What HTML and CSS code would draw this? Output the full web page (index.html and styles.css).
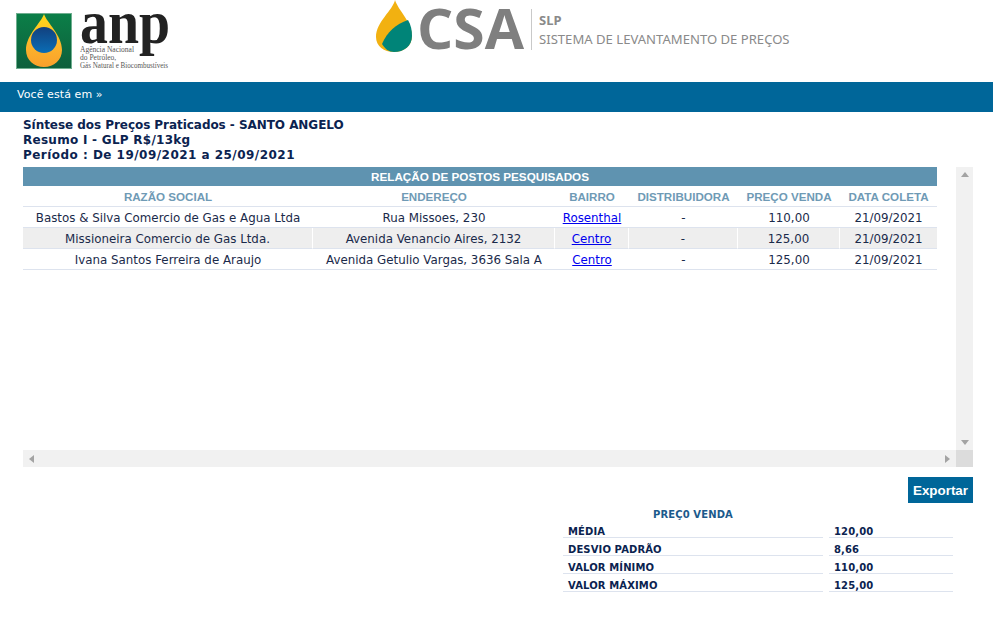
FILE: index.html
```html
<!DOCTYPE html>
<html lang="pt-BR">
<head>
<meta charset="utf-8">
<title>SLP - Sistema de Levantamento de Preços</title>
<link rel="stylesheet" href="styles.css">
</head>
<body>
<header class="top">
  <svg class="logo-anp" width="160" height="60" viewBox="0 0 160 60">
    <defs>
      <linearGradient id="g" x1="0" y1="0" x2="0" y2="1"><stop offset="0" stop-color="#0b7f48"/><stop offset="1" stop-color="#0e5f3c"/></linearGradient>
      <linearGradient id="b" x1="0" y1="0" x2="0" y2="1"><stop offset="0" stop-color="#12407e"/><stop offset="1" stop-color="#0a6db5"/></linearGradient>
      <linearGradient id="o" x1="0" y1="0" x2="0" y2="1"><stop offset="0" stop-color="#ffd91a"/><stop offset="0.55" stop-color="#fdb62a"/><stop offset="1" stop-color="#f9a02c"/></linearGradient>
    </defs>
    <rect x="0.5" y="0.5" width="55" height="55" fill="url(#g)" stroke="#6fae8f"/>
    <path d="M28 1 C25 10 10 22 10 37 C10 47 18 54 28 54 C38 54 46 47 46 37 C46 22 31 10 28 1Z" fill="url(#o)"/>
    <circle cx="28" cy="27" r="13" fill="url(#b)"/>
    <text class="anp-word" x="64" y="30" textLength="90" lengthAdjust="spacingAndGlyphs">anp</text>
    <text class="anp-small" x="64" y="39" textLength="54" lengthAdjust="spacingAndGlyphs">Agência Nacional</text>
    <text class="anp-small" x="64" y="47">do Petróleo,</text>
    <text class="anp-small" x="64" y="55" textLength="88" lengthAdjust="spacingAndGlyphs">Gás Natural e Biocombustíveis</text>
  </svg>
  <div class="brand">
    <svg class="logo-csa" width="152" height="54" viewBox="0 0 152 54">
      <path d="M19 0 C17 10 0 22 0 37 C0 46 8 52 18 52 C28 52 36 46 36 36 C36 22 22 10 19 0Z" fill="#f2b111"/>
      <path d="M6 44 C11 32 20 24 32 20 C35 25 36 30 36 36 C36 46 28 52 18 52 C13 52 9 49 6 44Z" fill="#008478"/>
      <text class="csa-word" x="41" y="49" textLength="107" lengthAdjust="spacingAndGlyphs">CSA</text>
    </svg>
    <div class="brand-text">
      <strong class="slp">SLP</strong>
      <span class="sys">SISTEMA DE LEVANTAMENTO DE PREÇOS</span>
    </div>
  </div>
</header>
<nav class="crumb">Você está em »</nav>
<main class="content">
  <h1 class="summary"><span class="line-a">Síntese dos Preços Praticados - SANTO ANGELO</span><span class="line-b">Resumo I - GLP R$/13kg</span><span class="line-c">Período : De 19/09/2021 a 25/09/2021</span></h1>
  <section class="scroller">
    <div class="view">
      <table class="stations">
        <colgroup><col class="c1"><col class="c2"><col class="c3"><col class="c4"><col class="c5"><col class="c6"></colgroup>
        <thead>
          <tr><th class="band" colspan="6">RELAÇÃO DE POSTOS PESQUISADOS</th></tr>
          <tr class="heads"><th>RAZÃO SOCIAL</th><th>ENDEREÇO</th><th>BAIRRO</th><th>DISTRIBUIDORA</th><th>PREÇO VENDA</th><th>DATA COLETA</th></tr>
        </thead>
        <tbody>
          <tr><td>Bastos &amp; Silva Comercio de Gas e Agua Ltda</td><td>Rua Missoes, 230</td><td><a href="#">Rosenthal</a></td><td>-</td><td>110,00</td><td>21/09/2021</td></tr>
          <tr class="alt"><td>Missioneira Comercio de Gas Ltda.</td><td>Avenida Venancio Aires, 2132</td><td><a href="#">Centro</a></td><td>-</td><td>125,00</td><td>21/09/2021</td></tr>
          <tr><td>Ivana Santos Ferreira de Araujo</td><td>Avenida Getulio Vargas, 3636 Sala A</td><td><a href="#">Centro</a></td><td>-</td><td>125,00</td><td>21/09/2021</td></tr>
        </tbody>
      </table>
    </div>
    <div class="bar-v"><i class="arrow up"></i><i class="arrow down"></i></div>
    <div class="bar-h"><i class="arrow left"></i><i class="arrow right"></i></div>
    <div class="corner"></div>
  </section>
  <div class="actions"><button class="export" type="button">Exportar</button></div>
  <table class="stats">
    <caption>PREÇ0 VENDA</caption>
    <tbody>
      <tr><th>MÉDIA</th><td class="gap"></td><td>120,00</td></tr>
      <tr><th>DESVIO PADRÃO</th><td class="gap"></td><td>8,66</td></tr>
      <tr><th>VALOR MÍNIMO</th><td class="gap"></td><td>110,00</td></tr>
      <tr><th>VALOR MÁXIMO</th><td class="gap"></td><td>125,00</td></tr>
    </tbody>
  </table>
</main>
</body>
</html>
```
FILE: styles.css
```css
* { box-sizing: border-box; }
html, body { margin: 0; padding: 0; background: #fff; overflow: hidden; }
body { height: 622px; font-family: "DejaVu Sans", Verdana, sans-serif; color: #0b2350; }

.top { height: 82px; display: flex; align-items: flex-start; position: relative; }
.logo-anp { display: block; margin: 13px 0 0 16px; flex: none; overflow: visible; }
.anp-word { font-family: "Liberation Serif", serif; font-size: 62px; font-weight: 700; fill: #222; }
.anp-small { font-family: "Liberation Serif", serif; font-size: 7.5px; fill: #555; }

.brand { display: flex; align-items: flex-start; margin-left: 200px; }
.logo-csa { display: block; flex: none; overflow: visible; }
.csa-word { font-family: "Open Sans", sans-serif; font-size: 56px; font-weight: 700; fill: #7f7f7f; }
.brand-text { margin: 9px 0 0 3px; height: 41px; border-left: 1px solid #c9c9c9; padding: 4px 0 0 7px; display: flex; flex-direction: column; color: #8a8a8a; }
.slp { font-size: 13px; line-height: 14px; font-weight: 700; font-family: "Noto Sans", sans-serif; }
.sys { font-size: 13.1px; line-height: 20px; margin-top: 2px; white-space: nowrap; font-family: "Noto Sans", sans-serif; }

.crumb { height: 30px; background: #006699; color: #fff; font-size: 11px; letter-spacing: 0.08px; line-height: 25px; padding-left: 17px; }

.content { padding: 6px 20px 0 23px; }
.summary { margin: 0; font-size: 12px; line-height: 15px; font-weight: 700; color: #0b2350; height: 49px; }
.summary span { display: block; }
.line-a { letter-spacing: -0.05px; }
.line-b { letter-spacing: 0.27px; }
.line-c { letter-spacing: 0.47px; }

.scroller { display: grid; grid-template-columns: 933px 17px; grid-template-rows: 283px 17px; width: 950px; }
.view { overflow: hidden; }
.stations { width: 914px; border-collapse: separate; border-spacing: 0; table-layout: fixed; font-size: 11.85px; }
.c1 { width: 290px; } .c2 { width: 242px; } .c3 { width: 74px; } .c4 { width: 109px; } .c5 { width: 102px; } .c6 { width: 97px; }
.stations th { padding: 1px 0 0; text-align: center; }
.stations td { padding: 2px 0 0; text-align: center; }
.band { height: 20px; background: #5f93b0; color: #fff; font: 700 11.7px/18px "Liberation Sans", Arial, sans-serif; border-bottom: 1px solid #fff; vertical-align: top; }
.heads th { height: 20px; font: 700 11.6px/18px "Liberation Sans", Arial, sans-serif; color: #6f9ab5; border-bottom: 1px solid #dde3ee; }
.stations td { height: 21px; border-bottom: 1px solid #dde3ee; color: #1a2a4a; line-height: 18px; white-space: nowrap; }
.alt td { background: #eeeeee; border-right: 1px solid #fff; }
.alt td:last-child { border-right: 0; }
.stations a { color: #0000ee; text-decoration: underline; }

.bar-v { background: #f1f1f1; position: relative; }
.bar-h { background: #f1f1f1; position: relative; }
.corner { background: #dcdcdc; }
.arrow { position: absolute; width: 0; height: 0; border-style: solid; border-color: transparent; }
.up { left: 5px; top: 5px; border-width: 0 4px 5px; border-bottom-color: #a3a3a3; }
.down { left: 5px; bottom: 5px; border-width: 5px 4px 0; border-top-color: #a3a3a3; }
.left { left: 6px; top: 5px; border-width: 4px 5px 4px 0; border-right-color: #a3a3a3; }
.right { right: 6px; top: 5px; border-width: 4px 0 4px 5px; border-left-color: #a3a3a3; }

.actions { display: flex; justify-content: flex-end; width: 950px; margin-top: 10px; }
.export { width: 65px; height: 26px; padding: 0; border: 0; background: #006699; color: #fff; font: 700 13.4px "Liberation Sans", Arial, sans-serif; }

.stats { margin: 3px 0 0 540px; width: 390px; border-collapse: separate; border-spacing: 0; table-layout: fixed; font-size: 10px; letter-spacing: 0.12px; font-weight: 700; color: #0b2350; }
.stats caption { width: 260px; height: 14px; padding-top: 3px; line-height: 11px; text-align: center; color: #1c5a8c; }
.stats th, .stats td { height: 18px; padding: 0 0 0 5px; text-align: left; border-bottom: 1px solid #dde3ee; font-weight: 700; vertical-align: bottom; line-height: 11px; }
.stats th { width: 260px; }
.stats .gap { width: 6px; padding: 0; border-bottom: 0; }
```
